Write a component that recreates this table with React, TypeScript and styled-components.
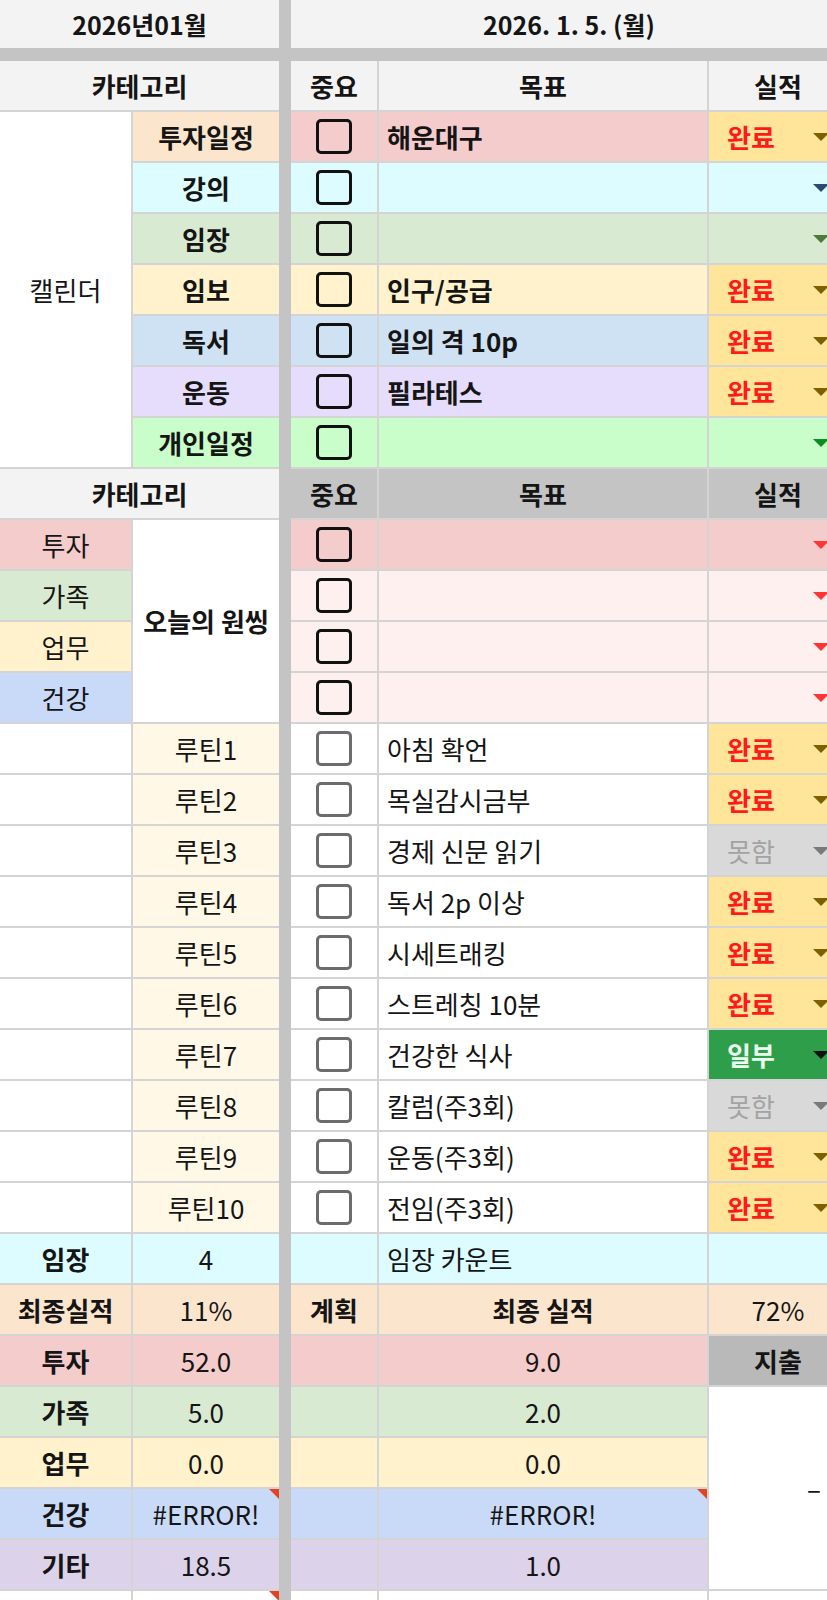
import React from 'react';
import styled, { createGlobalStyle } from 'styled-components';

const GlobalStyle = createGlobalStyle`
  html, body { margin: 0; padding: 0; background: #ffffff; }
  body { font-family: "Noto Sans CJK KR", "Noto Sans", sans-serif; }
`;

const Viewport = styled.div`
  width: 827px;
  overflow: hidden;
`;

const Sheet = styled.div`
  display: grid;
  width: 847px;
  grid-template-columns: 131px 146px 8px 86px 328px 138px;
  grid-template-rows: 48px 9px repeat(31, 49px);
  gap: 2px;
  background: #d4d4d4;
  font-size: 26px;
  line-height: 1;
  color: #151515;
`;

const VSeparator = styled.div`
  grid-column: 3;
  grid-row: 1 / -1;
  margin: 0 -2px;
  background: #c4c4c4;
`;

const HSeparator = styled.div`
  grid-column: 1 / -1;
  grid-row: 2;
  margin: -2px 0;
  background: #c4c4c4;
`;

type CellProps = {
  $bg?: string;
  $bold?: boolean;
  $left?: boolean;
  $right?: boolean;
  $span?: number;
  $rows?: number;
  $color?: string;
  $flag?: boolean;
  $size?: number;
};

const Cell = styled.div<CellProps>`
  position: relative;
  display: flex;
  align-items: center;
  justify-content: ${(p) => (p.$left ? 'flex-start' : p.$right ? 'flex-end' : 'center')};
  padding: ${(p) => (p.$left ? '0 0 0 8px' : p.$right ? '0 26px 0 0' : '0')};
  background: ${(p) => p.$bg ?? '#ffffff'};
  color: ${(p) => p.$color ?? '#151515'};
  font-weight: ${(p) => (p.$bold ? 700 : 400)};
  font-size: ${(p) => (p.$size ? `${p.$size}px` : 'inherit')};
  white-space: nowrap;
  overflow: hidden;
  grid-column: span ${(p) => p.$span ?? 1};
  grid-row: span ${(p) => p.$rows ?? 1};

  &::after {
    content: '';
    display: ${(p) => (p.$flag ? 'block' : 'none')};
    position: absolute;
    top: 0;
    right: 0;
    border-style: solid;
    border-width: 0 10px 10px 0;
    border-color: transparent #e5431f transparent transparent;
  }
`;

const StatusCell = styled.div<{ $bg: string; $color: string; $bold: boolean }>`
  display: flex;
  align-items: center;
  justify-content: space-between;
  padding: 0 18px 0 18px;
  background: ${(p) => p.$bg};
  color: ${(p) => p.$color};
  font-weight: ${(p) => (p.$bold ? 700 : 400)};
  white-space: nowrap;
`;

const Box = styled.span<{ $gray?: boolean }>`
  display: block;
  box-sizing: border-box;
  width: 36px;
  height: 35px;
  border: ${(p) => (p.$gray ? '3px' : '3.5px')} solid ${(p) => (p.$gray ? '#6c6c6c' : '#111111')};
  border-radius: 5px;
`;

const Caret = ({ color }: { color: string }) => (
  <svg width="16" height="8" viewBox="0 0 16 8">
    <path d="M0 0H16L8 8Z" fill={color} />
  </svg>
);

type StatusKind = '완료' | '못함' | '일부' | '';

const statusStyle = (kind: StatusKind, bg: string, arrow: string) => {
  if (kind === '완료') return { bg: '#ffe599', color: '#ff1a1a', bold: true, arrow: '#7f6000' };
  if (kind === '못함') return { bg: '#d9d9d9', color: '#a3a3a3', bold: false, arrow: '#7a7a7a' };
  if (kind === '일부') return { bg: '#2f9e4b', color: '#eafff0', bold: true, arrow: '#111111' };
  return { bg, color: '#151515', bold: false, arrow };
};

const Status = ({ kind, bg, arrow }: { kind: StatusKind; bg: string; arrow: string }) => {
  const s = statusStyle(kind, bg, arrow);
  return (
    <StatusCell $bg={s.bg} $color={s.color} $bold={s.bold}>
      <span>{kind}</span>
      <Caret color={s.arrow} />
    </StatusCell>
  );
};

const HEAD = '#f3f3f3';
const HEAD_DARK = '#c4c4c4';

const calendar: { cat: string; catBg: string; bg: string; goal: string; status: StatusKind; arrow: string }[] = [
  { cat: '투자일정', catBg: '#fce5cd', bg: '#f4cccc', goal: '해운대구', status: '완료', arrow: '#7f6000' },
  { cat: '강의', catBg: '#dcfcff', bg: '#dcfcff', goal: '', status: '', arrow: '#2a4a72' },
  { cat: '임장', catBg: '#d9ead3', bg: '#d9ead3', goal: '', status: '', arrow: '#4b7a3a' },
  { cat: '임보', catBg: '#fff2cc', bg: '#fff2cc', goal: '인구/공급', status: '완료', arrow: '#7f6000' },
  { cat: '독서', catBg: '#cfe2f3', bg: '#cfe2f3', goal: '일의 격 10p', status: '완료', arrow: '#7f6000' },
  { cat: '운동', catBg: '#e5ddfb', bg: '#e5ddfb', goal: '필라테스', status: '완료', arrow: '#7f6000' },
  { cat: '개인일정', catBg: '#c9fdca', bg: '#c9fdca', goal: '', status: '', arrow: '#118a22' },
];

const oneThing = [
  { cat: '투자', catBg: '#f4cccc', bg: '#f4cccc' },
  { cat: '가족', catBg: '#d9ead3', bg: '#fdf0ef' },
  { cat: '업무', catBg: '#fff2cc', bg: '#fdf0ef' },
  { cat: '건강', catBg: '#c9daf8', bg: '#fdf0ef' },
];

const routines: { goal: string; status: StatusKind }[] = [
  { goal: '아침 확언', status: '완료' },
  { goal: '목실감시금부', status: '완료' },
  { goal: '경제 신문 읽기', status: '못함' },
  { goal: '독서 2p 이상', status: '완료' },
  { goal: '시세트래킹', status: '완료' },
  { goal: '스트레칭 10분', status: '완료' },
  { goal: '건강한 식사', status: '일부' },
  { goal: '칼럼(주3회)', status: '못함' },
  { goal: '운동(주3회)', status: '완료' },
  { goal: '전임(주3회)', status: '완료' },
];

const totals = [
  { cat: '투자', bg: '#f4cccc', mine: '52.0', result: '9.0', flag: false },
  { cat: '가족', bg: '#d9ead3', mine: '5.0', result: '2.0', flag: false },
  { cat: '업무', bg: '#fff2cc', mine: '0.0', result: '0.0', flag: false },
  { cat: '건강', bg: '#c9daf8', mine: '#ERROR!', result: '#ERROR!', flag: true },
  { cat: '기타', bg: '#dcd3ea', mine: '18.5', result: '1.0', flag: false },
];

export default function App() {
  return (
    <Viewport>
      <GlobalStyle />
      <Sheet>
        <VSeparator />
        <HSeparator />

        <Cell $span={2} $bg={HEAD} $bold $size={25}>2026년01월</Cell>
        <Cell $span={3} $bg={HEAD} $bold $size={25}>2026. 1. 5. (월)</Cell>

        <Cell $span={2} $bg={HEAD} $bold>카테고리</Cell>
        <Cell $bg={HEAD} $bold>중요</Cell>
        <Cell $bg={HEAD} $bold>목표</Cell>
        <Cell $bg={HEAD} $bold>실적</Cell>

        {calendar.map((r, i) => (
          <React.Fragment key={r.cat}>
            {i === 0 && <Cell $rows={7}>캘린더</Cell>}
            <Cell $bg={r.catBg} $bold>{r.cat}</Cell>
            <Cell $bg={r.bg}><Box /></Cell>
            <Cell $bg={r.bg} $left $bold>{r.goal}</Cell>
            <Status kind={r.status} bg={r.bg} arrow={r.arrow} />
          </React.Fragment>
        ))}

        <Cell $span={2} $bg={HEAD} $bold>카테고리</Cell>
        <Cell $bg={HEAD_DARK} $bold>중요</Cell>
        <Cell $bg={HEAD_DARK} $bold>목표</Cell>
        <Cell $bg={HEAD_DARK} $bold>실적</Cell>

        {oneThing.map((r, i) => (
          <React.Fragment key={r.cat}>
            <Cell $bg={r.catBg}>{r.cat}</Cell>
            {i === 0 && <Cell $rows={4} $bold>오늘의 원씽</Cell>}
            <Cell $bg={r.bg}><Box /></Cell>
            <Cell $bg={r.bg} $left />
            <Status kind="" bg={r.bg} arrow="#ff3535" />
          </React.Fragment>
        ))}

        {routines.map((r, i) => (
          <React.Fragment key={r.goal}>
            <Cell />
            <Cell $bg="#fff8e6">루틴{i + 1}</Cell>
            <Cell><Box $gray /></Cell>
            <Cell $left>{r.goal}</Cell>
            <Status kind={r.status} bg="#ffffff" arrow="#7f6000" />
          </React.Fragment>
        ))}

        <Cell $bg="#dcfcff" $bold>임장</Cell>
        <Cell $bg="#dcfcff">4</Cell>
        <Cell $bg="#dcfcff" />
        <Cell $bg="#dcfcff" $left>임장 카운트</Cell>
        <Cell $bg="#dcfcff" />

        <Cell $bg="#fce5cd" $bold>최종실적</Cell>
        <Cell $bg="#fce5cd">11%</Cell>
        <Cell $bg="#fce5cd" $bold>계획</Cell>
        <Cell $bg="#fce5cd" $bold>최종 실적</Cell>
        <Cell $bg="#fce5cd">72%</Cell>

        {totals.map((r, i) => (
          <React.Fragment key={r.cat}>
            <Cell $bg={r.bg} $bold>{r.cat}</Cell>
            <Cell $bg={r.bg} $flag={r.flag}>{r.mine}</Cell>
            <Cell $bg={r.bg} />
            <Cell $bg={r.bg} $flag={r.flag}>{r.result}</Cell>
            {i === 0 && <Cell $bg="#b9b9b9" $bold>지출</Cell>}
            {i === 1 && <Cell $rows={4} $right>–</Cell>}
          </React.Fragment>
        ))}

        <Cell />
        <Cell $flag />
        <Cell />
        <Cell />
        <Cell />
      </Sheet>
    </Viewport>
  );
}
